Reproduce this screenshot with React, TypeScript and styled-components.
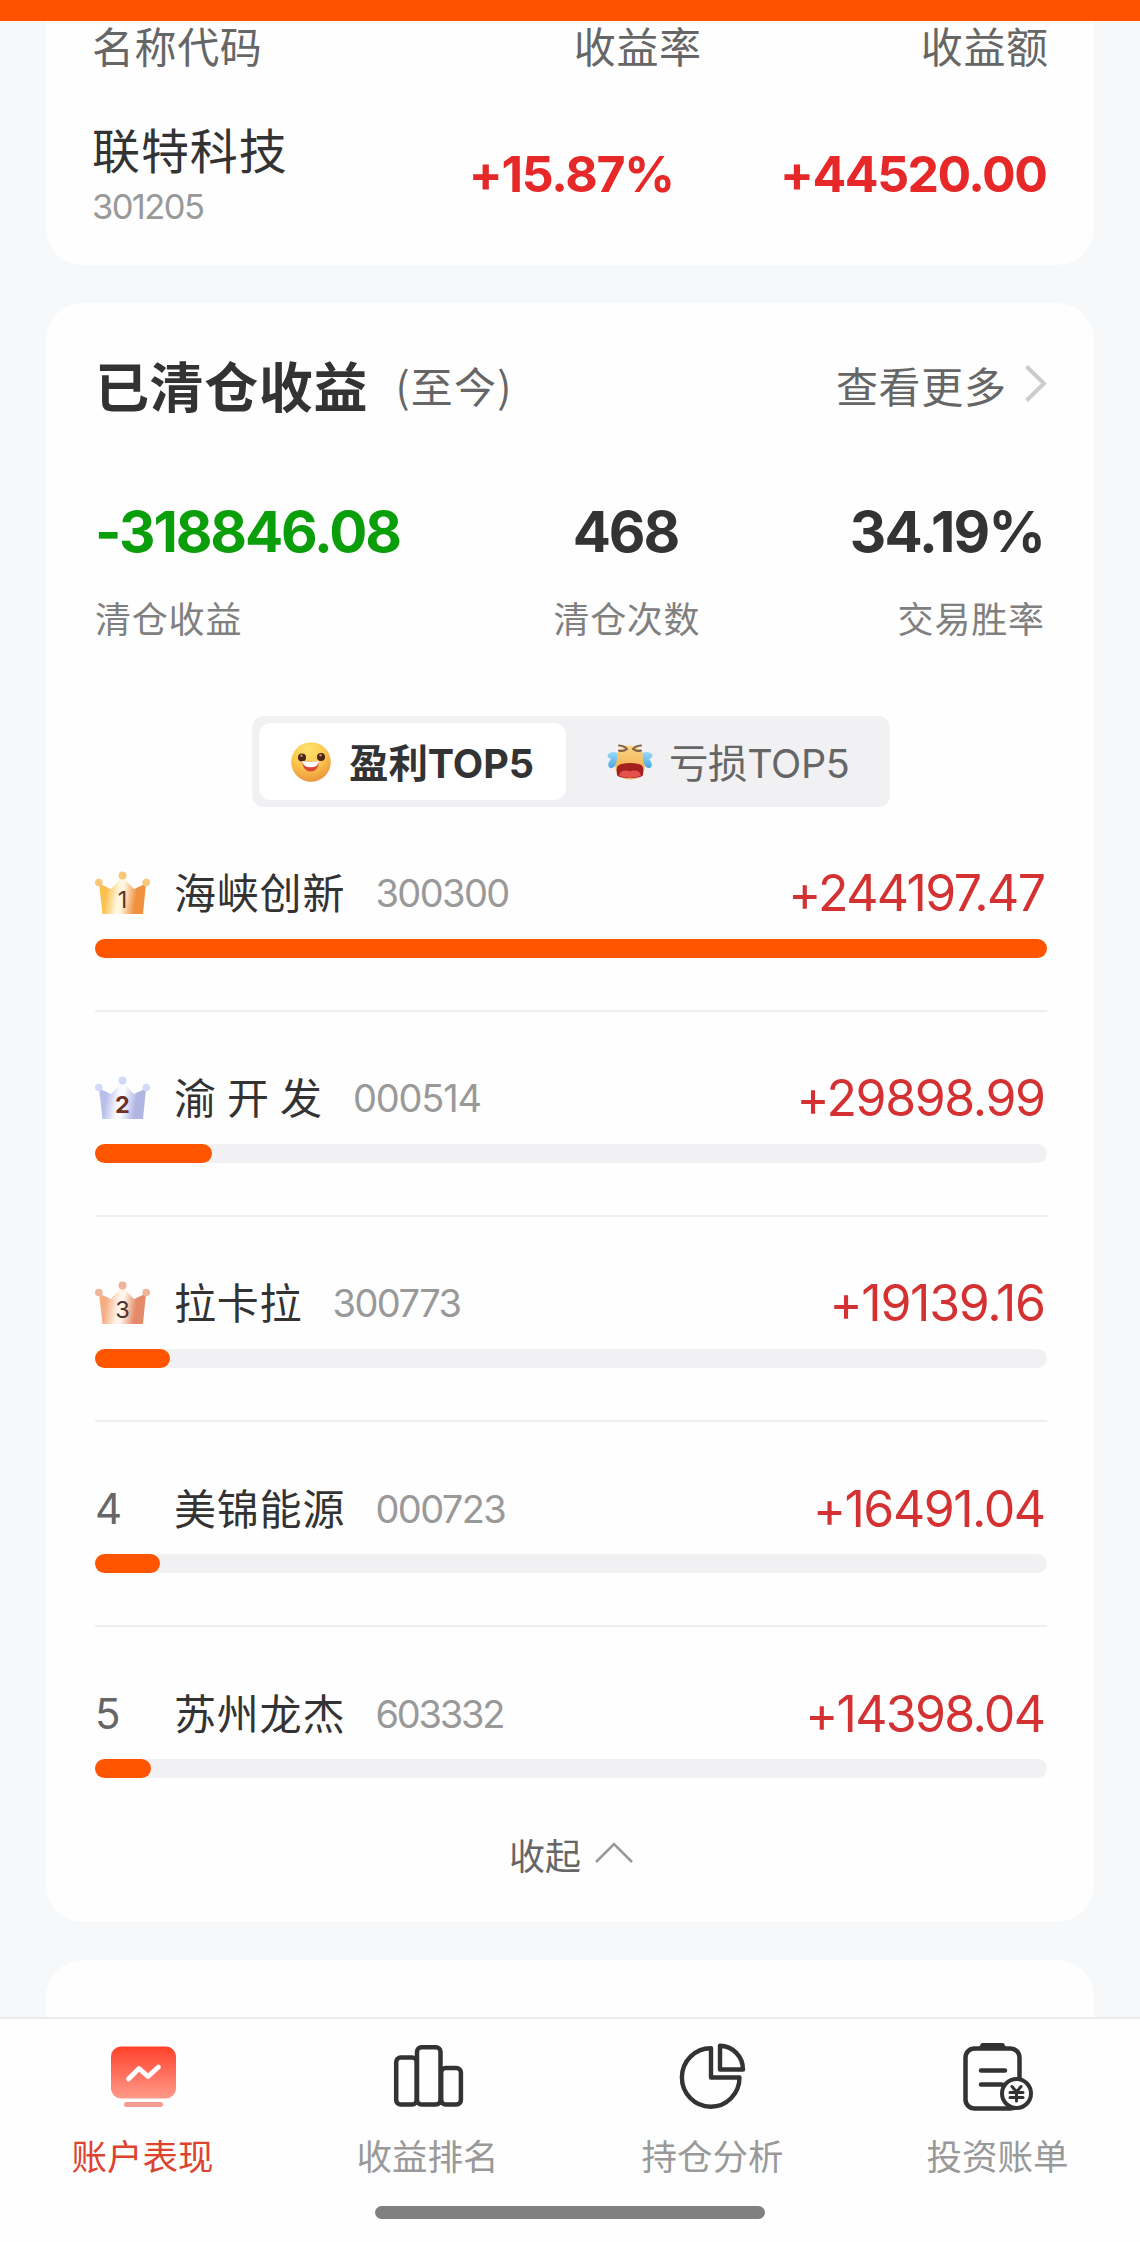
import React from 'react';
import styled, { createGlobalStyle } from 'styled-components';

const CJK = `"Noto Sans CJK SC", "Noto Sans", sans-serif`;
const LATIN = `Inter, "Noto Sans CJK SC", sans-serif`;

const GlobalStyle = createGlobalStyle`
  *, *::before, *::after { box-sizing: border-box; }
  html, body { margin: 0; padding: 0; background: #f7f8fa; }
  body { font-family: ${CJK}; color: #333; }
`;

const Screen = styled.div`
  width: 1140px;
  height: 2242px;
  display: flex;
  flex-direction: column;
  overflow: hidden;
  background: #f7f8fa;
`;

const StatusStrip = styled.div`
  flex: none;
  height: 21px;
  background: #ff5200;
`;

const Feed = styled.main`
  flex: none;
  height: 1996px;
  padding: 0 46px;
`;

const Card = styled.section<{ $h: number; $radius: string; $pad?: string }>`
  height: ${(p) => p.$h}px;
  border-radius: ${(p) => p.$radius};
  padding: ${(p) => p.$pad ?? '0'};
  background: #fefefe;
  & + & { margin-top: 38.5px; }
`;

const Text = styled.span<{
  $size: number;
  $lh: number;
  $color?: string;
  $weight?: number;
  $gap?: number;
}>`
  display: block;
  white-space: pre;
  font-family: ${CJK};
  font-size: ${(p) => p.$size}px;
  line-height: ${(p) => p.$lh}px;
  font-weight: ${(p) => p.$weight ?? 400};
  letter-spacing: ${(p) => p.$gap ?? 0}px;
  margin-right: ${(p) => -(p.$gap ?? 0)}px;
  color: ${(p) => p.$color ?? '#333'};
`;

const Num = styled(Text)`
  font-family: ${LATIN};
`;

const HoldingHead = styled.div`
  display: grid;
  grid-template-columns: 1fr 300px 347px;
  height: 48px;
  > * { justify-self: end; }
  > :first-child { justify-self: start; }
`;

const HoldingRow = styled.div`
  display: grid;
  grid-template-columns: 1fr 300px 373px;
  margin-top: 52px;
  > * { justify-self: end; }
  > :first-child { justify-self: start; }
`;

const HoldingValue = styled.div`
  padding-top: 26px;
`;

const TitleBar = styled.header`
  display: flex;
  align-items: center;
  height: 60px;
`;

const Period = styled.div`
  margin-left: 28px;
`;

const MoreLink = styled.a`
  margin: 0 -2px 0 auto;
  display: flex;
  align-items: center;
  gap: 19px;
`;

const Stats = styled.div`
  display: grid;
  grid-template-columns: 1fr 145px 345px;
  margin-top: 84px;
  padding-right: 3px;
`;

const Stat = styled.div<{ $align: string }>`
  display: flex;
  flex-direction: column;
  align-items: ${(p) => p.$align};
  gap: 27px;
`;

const Segmented = styled.div`
  display: flex;
  width: 638px;
  height: 91px;
  margin: 74px auto 0;
  padding: 7px;
  border-radius: 12px;
  background: #f1f1f4;
`;

const Segment = styled.button<{ $active?: boolean }>`
  display: flex;
  align-items: center;
  width: ${(p) => (p.$active ? 307 : 317)}px;
  height: 77px;
  padding: 0 0 0 ${(p) => (p.$active ? 32 : 41)}px;
  gap: ${(p) => (p.$active ? 18 : 16)}px;
  border: 0;
  border-radius: 12px;
  background: ${(p) => (p.$active ? '#fff' : 'transparent')};
`;

const SegmentLabel = styled.div`
  padding-top: 4px;
`;

const RankList = styled.ol`
  list-style: none;
  margin: 56px 0 0;
  padding: 0;
`;

const RankItem = styled.li`
  height: 205.2px;
`;

const RankLine = styled.div`
  display: flex;
  align-items: center;
  height: 60px;
`;

const RankBadge = styled.div`
  flex: none;
  width: 79px;
  display: flex;
`;

const StockName = styled.div`
  padding-bottom: 5px;
`;

const CodeCell = styled.div`
  margin-left: 31px;
`;

const AmountCell = styled.div`
  margin-left: auto;
  margin-right: 1px;
`;

const Track = styled.div`
  height: 19px;
  margin-top: 15.5px;
  border-radius: 10px;
  background: #f1f1f4;
`;

const Fill = styled.div`
  height: 100%;
  border-radius: 10px;
  background: #ff5500;
`;

const Rule = styled.div`
  height: 2px;
  margin-top: 52px;
  background: #eeeeef;
`;

const Collapse = styled.button`
  display: flex;
  align-items: center;
  gap: 14px;
  height: 50px;
  margin: -60px auto 0;
  padding: 0;
  border: 0;
  background: none;
`;

const TabBar = styled.nav`
  flex: none;
  height: 225px;
  border-top: 2px solid #eaebec;
  background: #fefefe;
`;

const Tabs = styled.div`
  display: grid;
  grid-template-columns: repeat(4, 1fr);
  height: 187px;
`;

const Tab = styled.div`
  display: flex;
  flex-direction: column;
  align-items: center;
  padding-top: 21px;
  gap: 17.5px;
`;

const HomeIndicator = styled.div`
  width: 390px;
  height: 13px;
  margin: 0 auto;
  border-radius: 7px;
  background: #808080;
`;

const CROWNS = [
  { a: '#fbc04e', b: '#fff6e0', c: '#f0913f', ball: '#f8c878', ink: '#5e3423', w: 400 },
  { a: '#b9bfea', b: '#fbfbff', c: '#b1b5e2', ball: '#d3d8f6', ink: '#6b3026', w: 700 },
  { a: '#f6ae84', b: '#fff3ea', c: '#e48a68', ball: '#efb49a', ink: '#4b3430', w: 400 },
];

function Crown({ rank }: { rank: number }) {
  const c = CROWNS[rank - 1];
  const id = `crown${rank}`;
  return (
    <svg width="56" height="44" viewBox="0 0 56 44">
      <defs>
        <linearGradient id={id} x1="0" x2="1" y1="0" y2="0.12">
          <stop offset="0.05" stopColor={c.a} />
          <stop offset="0.2" stopColor={c.a} />
          <stop offset="0.46" stopColor={c.b} />
          <stop offset="0.56" stopColor={c.b} />
          <stop offset="0.84" stopColor={c.c} />
          <stop offset="1" stopColor={c.c} />
        </linearGradient>
      </defs>
      <path d="M4 12.5 L16 18 L27.5 6 L39 18 L51 12.5 L48 43 H7.5 Z" fill={`url(#${id})`} />
      <circle cx="3.8" cy="11.5" r="3.8" fill={c.ball} />
      <circle cx="27.5" cy="4.6" r="4" fill={c.ball} />
      <circle cx="51.2" cy="11.5" r="3.8" fill={c.ball} />
      <text x="27.5" y="36.5" textAnchor="middle" fontFamily="Inter, sans-serif" fontSize="23.5" fontWeight={c.w} fill={c.ink}>
        {rank}
      </text>
    </svg>
  );
}

function GrinFace() {
  return (
    <svg width="40" height="42" viewBox="0 0 40 42">
      <defs>
        <radialGradient id="grin" cx="0.42" cy="0.2" r="0.85">
          <stop offset="0" stopColor="#ffe36e" />
          <stop offset="0.5" stopColor="#fbc84e" />
          <stop offset="1" stopColor="#ea8f3a" />
        </radialGradient>
      </defs>
      <circle cx="20" cy="21" r="19.800" fill="url(#grin)" />
      <circle cx="11" cy="16.500" r="4" fill="#4a2416" />
      <circle cx="30" cy="16" r="4" fill="#4a2416" />
      <circle cx="10.500" cy="14.800" r="1.200" fill="#c39368" />
      <circle cx="29.500" cy="14.300" r="1.200" fill="#c39368" />
      <path d="M11 20 Q19.500 21.500 28 20 Q27.500 30.500 19.500 30.500 Q12 30.500 11 20Z" fill="#dc463a" />
      <path d="M11 20 Q19.500 21.500 28 20 Q27.500 26.300 19.500 26.300 Q12 26.300 11 20Z" fill="#fff" />
    </svg>
  );
}

function CryFace() {
  return (
    <svg width="46" height="42" viewBox="0 0 46 42">
      <defs>
        <linearGradient id="cry" x1="0" x2="0" y1="0" y2="1">
          <stop offset="0" stopColor="#fbd585" />
          <stop offset="0.6" stopColor="#f5b75c" />
          <stop offset="1" stopColor="#f3b26c" />
        </linearGradient>
        <linearGradient id="tear" x1="0" x2="0" y1="0" y2="1">
          <stop offset="0" stopColor="#9ad8f6" />
          <stop offset="1" stopColor="#4ba6e6" />
        </linearGradient>
      </defs>
      <path d="M23 4.500 C33 4.500 38 12 38 22 C38 33 33 38.500 23 38.500 C13 38.500 8 33 8 22 C8 12 13 4.500 23 4.500Z" fill="url(#cry)" />
      <path d="M12 4.500 Q18 5 20 8 Q16 11 12 9.500" fill="none" stroke="#80604a" strokeWidth="1.900" strokeLinecap="round" />
      <path d="M34 4.500 Q28 5 26 8 Q30 11 34 9.500" fill="none" stroke="#80604a" strokeWidth="1.900" strokeLinecap="round" />
      <path d="M0.500 13.500 Q5 9.500 10.500 12 Q10.500 22 7 26 Q3.500 28.500 1.500 25.500 Q0.500 22 4 18 Q0.500 17 0.500 13.500Z" fill="url(#tear)" />
      <path d="M45.500 13.500 Q41 9.500 35.500 12 Q35.500 22 39 26 Q42.500 28.500 44.500 25.500 Q45.500 22 42 18 Q45.500 17 45.500 13.500Z" fill="url(#tear)" />
      <path d="M10 34 Q8 23.500 14.500 23 Q23 21 31.500 23 Q38 23.500 36 34 Q34 37.500 23 36.500 Q12 37.500 10 34Z" fill="#a3201f" />
      <path d="M12 34.500 Q13 29 20 29.500 L23 30.500 L26 29.500 Q33 29 34 34.500 Q31 36.500 23 36 Q15 36.500 12 34.500Z" fill="#e4504c" />
    </svg>
  );
}

const ChevronRight = () => (
  <svg width="24" height="40" viewBox="0 0 24 40" fill="none" stroke="#ccc" strokeWidth="4">
    <path d="M1.500 1.500 L19 18.500 L1.500 35.500" />
  </svg>
);

const ChevronUp = () => (
  <svg width="38" height="24" viewBox="0 0 38 24" fill="none" stroke="#999" strokeWidth="2.600">
    <path d="M1 20 L19 2 L37 20" />
  </svg>
);

const PerformanceIcon = () => (
  <svg width="72" height="72" viewBox="0 0 72 72">
    <defs>
      <linearGradient id="perf" x1="0" x2="0" y1="0" y2="1">
        <stop offset="0" stopColor="#ff412b" />
        <stop offset="1" stopColor="#ff9a8a" />
      </linearGradient>
    </defs>
    <rect x="4" y="6.500" width="65" height="52" rx="10" fill="url(#perf)" />
    <path d="M21.500 39 L32 28.500 L41 36.500 L51.500 27" fill="none" stroke="#fff" strokeWidth="4.800" strokeLinecap="round" strokeLinejoin="round" />
    <rect x="17" y="62" width="39" height="5" rx="2.500" fill="#f39d90" />
  </svg>
);

const RankingIcon = () => (
  <svg width="72" height="72" viewBox="0 0 72 72" fill="none" stroke="#333" strokeWidth="4.500">
    <rect x="4.200" y="17.500" width="20.500" height="47" rx="4.500" />
    <rect x="25" y="7.300" width="23.500" height="57.200" rx="4.500" />
    <rect x="49.200" y="28" width="19.700" height="36.500" rx="4.500" />
  </svg>
);

const AnalysisIcon = () => (
  <svg width="72" height="72" viewBox="0 0 72 72" fill="none" stroke="#333" strokeWidth="4.400" strokeLinejoin="round">
    <path d="M34 8.300 V37.500 H62.500 A28.800 29.200 0 1 1 34 8.300Z" />
    <path d="M43 5.800 V29.500 H66 A23.300 23.700 0 0 0 43 5.800Z" />
  </svg>
);

const BillIcon = () => (
  <svg width="72" height="72" viewBox="0 0 72 72" fill="none" stroke="#333" strokeWidth="4.500" strokeLinecap="round" strokeLinejoin="round">
    <rect x="3.500" y="8.500" width="54" height="60" rx="9" />
    <path d="M20 4 H41 L44 9 H17Z" fill="#333" strokeWidth="2" />
    <path d="M19 30.500 H43 M19 44.500 H40" />
    <circle cx="54.500" cy="53.500" r="14.500" fill="#fefefe" strokeWidth="4" />
    <path d="M50 46.500 L54.500 52 L59 46.500 M54.500 52 V61 M48 52.500 H61 M48 57.500 H61" strokeWidth="3" />
  </svg>
);

const RANKS = [
  { name: '海峡创新', code: '300300', codeGap: -1.6, amount: '+244197.47', gap: -1.6, pct: 100 },
  { name: '渝 开 发', code: '000514', codeGap: -1.2, amount: '+29898.99', gap: -1.4, pct: 12.3 },
  { name: '拉卡拉', code: '300773', codeGap: -1.6, amount: '+19139.16', gap: -1.3, pct: 7.9 },
  { name: '美锦能源', code: '000723', codeGap: -1.6, amount: '+16491.04', gap: -1.5, pct: 6.85 },
  { name: '苏州龙杰', code: '603332', codeGap: -2.2, amount: '+14398.04', gap: -1.7, pct: 5.9 },
];

const TABS = [
  { label: '账户表现', Icon: PerformanceIcon, active: true },
  { label: '收益排名', Icon: RankingIcon },
  { label: '持仓分析', Icon: AnalysisIcon },
  { label: '投资账单', Icon: BillIcon },
];

export default function App() {
  return (
    <Screen>
      <GlobalStyle />
      <StatusStrip />
      <Feed>
        <Card $h={243.5} $radius="0 0 37px 37px" $pad="0 46px 0 46px">
          <HoldingHead>
            <Text $size={42} $lh={48} $gap={0.6} $color="#666">名称代码</Text>
            <Text $size={42} $lh={48} $gap={0.6} $color="#666">收益率</Text>
            <Text $size={42} $lh={48} $gap={0.6} $color="#666">收益额</Text>
          </HoldingHead>
          <HoldingRow>
            <div>
              <Text $size={48} $lh={54} $gap={0.9}>联特科技</Text>
              <Num $size={34.5} $lh={63} $gap={-1.6} $color="#999">301205</Num>
            </div>
            <HoldingValue>
              <Num $size={50} $lh={54} $gap={-1.3} $weight={700} $color="#e62828">+15.87%</Num>
            </HoldingValue>
            <HoldingValue>
              <Num $size={50} $lh={54} $gap={-1.5} $weight={700} $color="#e62828">+44520.00</Num>
            </HoldingValue>
          </HoldingRow>
        </Card>

        <Card $h={1618.5} $radius="37px" $pad="52px 47px 0 49px">
          <TitleBar>
            <Text $size={54} $lh={60} $weight={700} $gap={0.6}>已清仓收益</Text>
            <Period>
              <Text $size={42} $lh={60} $gap={1.2} $color="#666">(至今)</Text>
            </Period>
            <MoreLink>
              <Text $size={42} $lh={60} $gap={0.7} $color="#666">查看更多</Text>
              <ChevronRight />
            </MoreLink>
          </TitleBar>

          <Stats>
            <Stat $align="flex-start">
              <Num $size={56.5} $lh={66} $gap={-2.1} $weight={700} $color="#0a9f0a">-318846.08</Num>
              <Text $size={36} $lh={50} $gap={0.8} $color="#808080">清仓收益</Text>
            </Stat>
            <Stat $align="center">
              <Num $size={56.5} $lh={66} $gap={-2} $weight={700}>468</Num>
              <Text $size={36} $lh={50} $gap={0.6} $color="#808080">清仓次数</Text>
            </Stat>
            <Stat $align="flex-end">
              <Num $size={56.5} $lh={66} $gap={-1.8} $weight={700} style={{ marginRight: 0 }}>34.19%</Num>
              <Text $size={36} $lh={50} $gap={0.8} $color="#808080">交易胜率</Text>
            </Stat>
          </Stats>

          <Segmented>
            <Segment $active>
              <GrinFace />
              <SegmentLabel>
                <Num $size={39.5} $lh={60} $weight={700} $gap={-0.1}>盈利TOP5</Num>
              </SegmentLabel>
            </Segment>
            <Segment>
              <CryFace />
              <SegmentLabel>
                <Num $size={39.5} $lh={60} $gap={-0.4} $color="#666">亏损TOP5</Num>
              </SegmentLabel>
            </Segment>
          </Segmented>

          <RankList>
            {RANKS.map((r, i) => (
              <RankItem key={r.code}>
                <RankLine>
                  <RankBadge>
                    {i < 3 ? <Crown rank={i + 1} /> : <Num $size={42} $lh={60} $color="#666">{i + 1}</Num>}
                  </RankBadge>
                  <StockName>
                    <Text $size={42} $lh={55} $gap={0.8}>{r.name}</Text>
                  </StockName>
                  <CodeCell>
                    <Num $size={38} $lh={60} $gap={r.codeGap} $color="#999">{r.code}</Num>
                  </CodeCell>
                  <AmountCell>
                    <Num $size={50} $lh={60} $gap={r.gap} $color="#d43232">{r.amount}</Num>
                  </AmountCell>
                </RankLine>
                <Track>
                  <Fill style={{ width: `${r.pct}%` }} />
                </Track>
                {i < RANKS.length - 1 && <Rule />}
              </RankItem>
            ))}
          </RankList>

          <Collapse>
            <Text $size={36} $lh={50} $color="#666">收起</Text>
            <ChevronUp />
          </Collapse>
        </Card>

        <Card $h={57} $radius="37px 37px 0 0" />
      </Feed>

      <TabBar>
        <Tabs>
          {TABS.map(({ label, Icon, active }) => (
            <Tab key={label}>
              <Icon />
              <Text $size={35.5} $lh={50} $color={active ? '#dc4430' : '#999'}>{label}</Text>
            </Tab>
          ))}
        </Tabs>
        <HomeIndicator />
      </TabBar>
    </Screen>
  );
}
